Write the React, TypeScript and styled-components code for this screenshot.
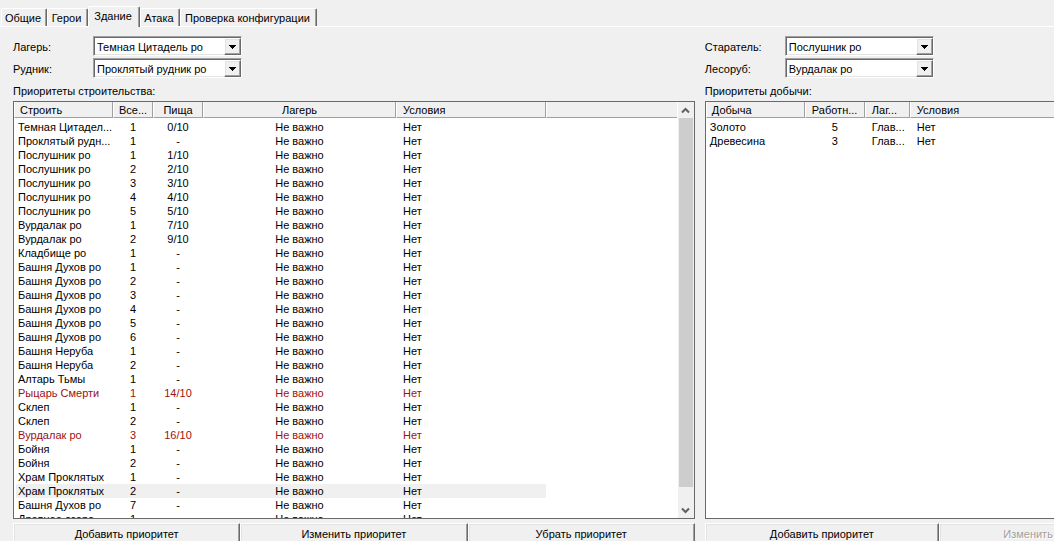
import React from 'react';
import styled, { createGlobalStyle, css } from 'styled-components';

const GlobalStyle = createGlobalStyle`
  * { box-sizing: border-box; }
  body {
    margin: 0;
    background: #f0f0f0;
    overflow: hidden;
  }
  body, button, select, table {
    font-family: "Liberation Sans", Arial, sans-serif;
    font-size: 11px;
    line-height: 14px;
    color: #000;
  }
`;

const raised = css`
  border: 1px solid;
  border-color: #fff #696969 #696969 #fff;
  box-shadow: inset -1px -1px 0 #a0a0a0, inset 1px 1px 0 #e3e3e3;
`;

const Window = styled.main`
  min-height: 100vh;
  width: 134.7%;
  background: #f0f0f0;
`;

const TabBar = styled.div`
  display: flex;
  align-items: flex-end;
  height: 27px;
  padding-left: 1px;
  border-bottom: 1px solid #fff;
`;

const Tab = styled.button<{ $width: number; $active?: boolean }>`
  width: ${p => p.$width}px;
  height: ${p => (p.$active ? 21 : 18)}px;
  margin: 0 0 ${p => (p.$active ? -1 : 0)}px;
  padding: 0 2px ${p => (p.$active ? 2 : 0)}px 0;
  background: #f0f0f0;
  border: 1px solid;
  border-color: #fff #696969 #f0f0f0 #fff;
  border-bottom-width: 0;
  border-radius: 2px 2px 0 0;
  box-shadow: inset -1px 0 0 #a0a0a0;
  white-space: nowrap;
`;

const Panels = styled.div`
  display: grid;
  grid-template-columns: 34fr 35fr;
  column-gap: 10px;
  padding: 9px 13px 0;
`;

const Panel = styled.section`
  min-width: 0;
`;

const Fields = styled.div`
  display: grid;
  row-gap: 2px;
`;

const Field = styled.div`
  display: grid;
  grid-template-columns: 80px 149px;
  align-items: center;
`;

const FieldLabel = styled.label`
  padding-top: 2px;
`;

const ComboBox = styled.div`
  position: relative;
  height: 20px;
  background: #fff;
  border: 1px solid;
  border-color: #a0a0a0 #fff #fff #a0a0a0;
  box-shadow: inset 1px 1px 0 #696969, inset -1px -1px 0 #e3e3e3;
`;

const Select = styled.select`
  appearance: none;
  display: block;
  width: 100%;
  height: 18px;
  padding: 2px 18px 0 3px;
  border: 0;
  background: transparent;
`;

const ComboArrow = styled.span`
  ${raised}
  position: absolute;
  top: 1px;
  right: 0;
  bottom: 0;
  width: 17px;
  display: flex;
  align-items: center;
  justify-content: center;
  background: #f0f0f0;
  pointer-events: none;
`;

const Caption = styled.h2`
  margin: 6px 0 3px;
  font-size: 11px;
  font-weight: 400;
  line-height: 14px;
`;

const ListBox = styled.div`
  display: flex;
  height: calc(100vh - 123px);
  min-height: 160px;
  background: #fff;
  border: 1px solid #696969;
`;

const ListView = styled.div`
  flex: 1;
  min-width: 0;
  overflow: hidden;
`;

const Table = styled.table`
  width: 100%;
  table-layout: fixed;
  border-collapse: separate;
  border-spacing: 0;
  tbody::before {
    content: '';
    display: table-row;
    height: 2px;
  }
`;

const HeadCell = styled.th<{ $center?: boolean; $first?: boolean; $filler?: boolean }>`
  height: 16px;
  padding: 1px 0 0 ${p => (p.$center ? 0 : p.$first ? 5 : 6)}px;
  background: #f0f0f0;
  border: solid;
  border-width: 0 ${p => (p.$filler ? 0 : 1)}px 1px 1px;
  border-color: #fff #a0a0a0 #a0a0a0 #fff;
  font-weight: 400;
  text-align: ${p => (p.$center ? 'center' : 'left')};
  white-space: nowrap;
`;

const Row = styled.tr<{ $alert?: boolean; $selected?: boolean }>`
  color: ${p => (p.$alert ? '#a01010' : '#000')};
  td:not(:empty) {
    background-color: ${p => (p.$selected ? '#f0f0f0' : 'transparent')};
  }
`;

const Cell = styled.td<{ $center?: boolean }>`
  height: 14px;
  padding: ${p => (p.$center ? '0' : '0 0 0 7px')};
  text-align: ${p => (p.$center ? 'center' : 'left')};
  white-space: nowrap;
  &:first-child {
    padding-left: 2px;
    border-left: 2px solid transparent;
    background-clip: padding-box;
  }
`;

const ScrollBar = styled.div`
  display: flex;
  flex-direction: column;
  width: 17px;
  padding: 0 1px;
  background: #f0f0f0;
  border-left: 1px solid #fff;
`;

const ScrollTrack = styled.div`
  flex: 1;
`;

const ScrollThumb = styled.div`
  height: 96%;
  background: #cdcdcd;
`;

const ScrollButton = styled.button`
  display: flex;
  align-items: center;
  justify-content: center;
  height: 16px;
  padding: 0;
  border: 0;
  background: transparent;
`;

const Actions = styled.div`
  display: grid;
  grid-template-columns: repeat(3, 1fr);
  margin-top: 4px;
`;

const ActionButton = styled.button`
  ${raised}
  height: 22px;
  padding: 0;
  background: #f0f0f0;
  &:disabled {
    color: #a0a0a0;
    text-shadow: 1px 1px 0 #fff;
  }
`;

type Column = { title: string; width?: number; center?: boolean; headCenter?: boolean };
type Item = { cells: string[]; alert?: boolean; selected?: boolean };

const item = (name: string, count: number, food = '-', extra: Partial<Item> = {}): Item => ({
  cells: [name, String(count), food, 'Не важно', 'Нет', ''],
  ...extra,
});

const buildColumns: Column[] = [
  { title: 'Строить', width: 99 },
  { title: 'Все...', width: 40, center: true, headCenter: true },
  { title: 'Пища', width: 50, center: true, headCenter: true },
  { title: 'Лагерь', width: 193, center: true, headCenter: true },
  { title: 'Условия', width: 150 },
  { title: '' },
];

const buildItems: Item[] = [
  item('Темная Цитадел...', 1, '0/10'),
  item('Проклятый рудн...', 1),
  item('Послушник ро', 1, '1/10'),
  item('Послушник ро', 2, '2/10'),
  item('Послушник ро', 3, '3/10'),
  item('Послушник ро', 4, '4/10'),
  item('Послушник ро', 5, '5/10'),
  item('Вурдалак ро', 1, '7/10'),
  item('Вурдалак ро', 2, '9/10'),
  item('Кладбище ро', 1),
  item('Башня Духов ро', 1),
  item('Башня Духов ро', 2),
  item('Башня Духов ро', 3),
  item('Башня Духов ро', 4),
  item('Башня Духов ро', 5),
  item('Башня Духов ро', 6),
  item('Башня Неруба', 1),
  item('Башня Неруба', 2),
  item('Алтарь Тьмы', 1),
  item('Рыцарь Смерти', 1, '14/10', { alert: true }),
  item('Склеп', 1),
  item('Склеп', 2),
  item('Вурдалак ро', 3, '16/10', { alert: true }),
  item('Бойня', 1),
  item('Бойня', 2),
  item('Храм Проклятых', 1),
  item('Храм Проклятых', 2, '-', { selected: true }),
  item('Башня Духов ро', 7),
  item('Древнее озеро', 1),
];

const lootColumns: Column[] = [
  { title: 'Добыча', width: 99 },
  { title: 'Работн...', width: 60, center: true },
  { title: 'Лаг...', width: 45 },
  { title: 'Условия' },
];

const lootItems: Item[] = [
  { cells: ['Золото', '5', 'Глав...', 'Нет'] },
  { cells: ['Древесина', '3', 'Глав...', 'Нет'] },
];

function Combo({ id, label, value }: { id: string; label: string; value: string }) {
  return (
    <Field>
      <FieldLabel htmlFor={id}>{label}</FieldLabel>
      <ComboBox>
        <Select id={id} defaultValue={value}>
          <option>{value}</option>
        </Select>
        <ComboArrow>
          <svg width="7" height="4" viewBox="0 0 7 4" shapeRendering="crispEdges" aria-hidden="true">
            <path d="M0 0h7v1h-1v1h-1v1h-1v1h-1v-1h-1v-1h-1v-1h-1z" />
          </svg>
        </ComboArrow>
      </ComboBox>
    </Field>
  );
}

function PriorityTable({ columns, items, label }: { columns: Column[]; items: Item[]; label: string }) {
  return (
    <ListView>
      <Table aria-label={label}>
        <colgroup>
          {columns.map((c, i) => <col key={i} width={c.width} />)}
        </colgroup>
        <thead>
          <tr>
            {columns.map((c, i) => (
              <HeadCell key={i} $first={i === 0} $center={c.headCenter} $filler={i === columns.length - 1}>
                {c.title}
              </HeadCell>
            ))}
          </tr>
        </thead>
        <tbody>
          {items.map((row, i) => (
            <Row key={i} $alert={row.alert} $selected={row.selected}>
              {row.cells.map((text, j) => <Cell key={j} $center={columns[j].center}>{text}</Cell>)}
            </Row>
          ))}
        </tbody>
      </Table>
    </ListView>
  );
}

function Chevron({ down }: { down?: boolean }) {
  return (
    <svg width="9" height="7" viewBox="0 0 9 7" fill="none" stroke="#606060" strokeWidth="2" aria-hidden="true">
      <path d={down ? 'M1 1.5l3.5 3.5l3.5-3.5' : 'M1 5.5l3.5-3.5l3.5 3.5'} />
    </svg>
  );
}

export default function App() {
  return (
    <>
      <GlobalStyle />
      <Window>
        <TabBar role="tablist">
          <Tab role="tab" $width={46}>Общие</Tab>
          <Tab role="tab" $width={41}>Герои</Tab>
          <Tab role="tab" $width={52} $active aria-selected>Здание</Tab>
          <Tab role="tab" $width={40}>Атака</Tab>
          <Tab role="tab" $width={137}>Проверка конфигурации</Tab>
        </TabBar>
        <Panels>
          <Panel>
            <Fields>
              <Combo id="camp" label="Лагерь:" value="Темная Цитадель ро" />
              <Combo id="mine" label="Рудник:" value="Проклятый рудник ро" />
            </Fields>
            <Caption>Приоритеты строительства:</Caption>
            <ListBox>
              <PriorityTable columns={buildColumns} items={buildItems} label="Приоритеты строительства" />
              <ScrollBar>
                <ScrollButton aria-label="Вверх"><Chevron /></ScrollButton>
                <ScrollTrack><ScrollThumb /></ScrollTrack>
                <ScrollButton aria-label="Вниз"><Chevron down /></ScrollButton>
              </ScrollBar>
            </ListBox>
            <Actions>
              <ActionButton>Добавить приоритет</ActionButton>
              <ActionButton>Изменить приоритет</ActionButton>
              <ActionButton>Убрать приоритет</ActionButton>
            </Actions>
          </Panel>
          <Panel>
            <Fields>
              <Combo id="miner" label="Старатель:" value="Послушник ро" />
              <Combo id="lumberjack" label="Лесоруб:" value="Вурдалак ро" />
            </Fields>
            <Caption>Приоритеты добычи:</Caption>
            <ListBox>
              <PriorityTable columns={lootColumns} items={lootItems} label="Приоритеты добычи" />
            </ListBox>
            <Actions>
              <ActionButton>Добавить приоритет</ActionButton>
              <ActionButton disabled>Изменить приоритет</ActionButton>
              <ActionButton disabled>Убрать приоритет</ActionButton>
            </Actions>
          </Panel>
        </Panels>
      </Window>
    </>
  );
}
